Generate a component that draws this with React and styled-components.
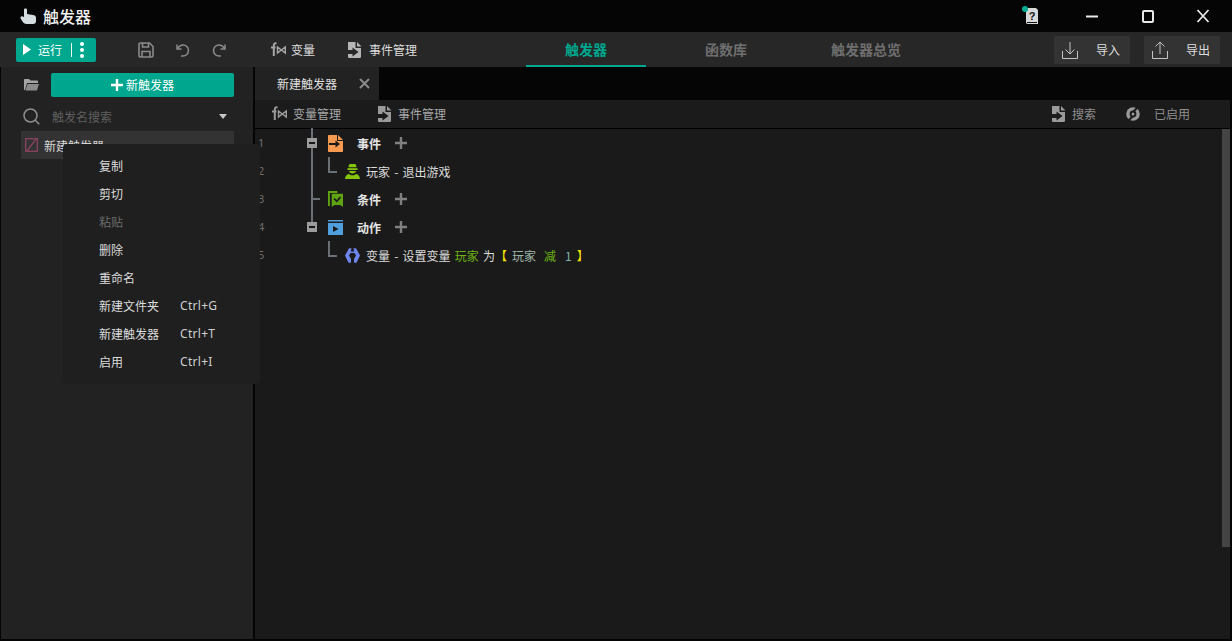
import React from "react";
import styled, { createGlobalStyle } from "styled-components";

const Global = createGlobalStyle`
  html, body { margin: 0; padding: 0; height: 100%; background: #050505; overflow: hidden; }
  #root { height: 100%; }
  * { box-sizing: border-box; }
`;

const Shell = styled.div`
  position: relative;
  width: 1232px; height: 641px;
  display: flex; flex-direction: column;
  background: #050505;
  color: #e2e2e2;
  font-family: "Noto Sans CJK SC", "Noto Sans", sans-serif;
  font-size: 12px;
  padding-bottom: 2px;
`;

const TitleBar = styled.header`
  height: 32px; flex: none;
  display: flex; align-items: center;
  padding-left: 20px;
`;
const Title = styled.h1`
  margin: 0 0 0 6px; font-size: 16px; font-weight: 500; color: #f0f0f0; line-height: 20px;
`;
const WindowControls = styled.div`
  margin-left: auto; display: flex; align-items: center; padding-right: 22px;
`;
const HelpWrap = styled.span`
  position: relative; display: flex; margin-right: 46px;
  &::before {
    content: ""; position: absolute; left: -3px; top: -2px; width: 6px; height: 6px;
    border-radius: 50%; background: #00ad94;
  }
`;
const WinButton = styled.span`
  display: flex; width: 14px; height: 14px; margin-left: ${p => p.$gap}px;
`;

const MainBar = styled.div`
  height: 35px; flex: none;
  display: flex; align-items: center;
  background: #272727;
  padding-left: 16px;
`;
const RunButton = styled.div`
  width: 80px; height: 24px; border-radius: 2px;
  background: #00a78f; color: #fff;
  display: flex; align-items: center; padding-left: 6px;
`;
const RunLabel = styled.span` margin-left: 6px; line-height: 24px; `;
const RunDivider = styled.span` width: 1px; height: 14px; background: #e8f8f5; margin-left: 9px; `;
const RunDots = styled.span`
  display: flex; flex-direction: column; gap: 2px; margin-left: 8px;
  i { display: block; width: 4px; height: 4px; border-radius: 50%; background: #fff; }
`;
const QuickIcons = styled.div`
  display: flex; align-items: center; margin-left: 42px; width: 132px; gap: 22px;
`;
const ToolItem = styled.div`
  display: flex; align-items: center; gap: ${p => p.$gap ?? 6}px;
  margin-right: ${p => p.$mr ?? 0}px; color: ${p => p.$color ?? "#dedede"};
  margin-left: ${p => p.$push ? "auto" : "0"};
  line-height: 18px; white-space: nowrap;
`;
const Tabs = styled.nav`
  display: flex; gap: 20px; margin-left: 109px; height: 35px; margin-right: auto;
`;
const Tab = styled.div`
  width: 120px; height: 35px;
  display: flex; align-items: center; justify-content: center;
  font-size: 14px; font-weight: 700;
  color: ${p => p.$active ? "#00a78f" : "#6f6f6f"};
  border-bottom: 2px solid ${p => p.$active ? "#00a78f" : "transparent"};
`;
const PortButton = styled.div`
  width: 76px; height: 28px; border-radius: 2px; background: #333333;
  display: flex; align-items: center; padding-left: 8px; gap: 18px;
  margin-right: ${p => p.$mr}px; color: #dedede;
`;

const Body = styled.div`
  flex: 1; min-height: 0; display: flex; padding: 0 2px 0 1px;
`;
const Sidebar = styled.aside`
  width: 252px; flex: none; background: #222222; margin-right: 2px;
  display: flex; flex-direction: column; padding: 6px 19px 0 20px;
`;
const SideTop = styled.div`
  display: flex; align-items: center; height: 24px; padding-left: 3px;
`;
const NewButton = styled.div`
  margin-left: 12px; width: 183px; height: 24px; border-radius: 2px; background: #00a78f; color: #fff;
  display: flex; align-items: center; justify-content: center; gap: 3px; line-height: 24px;
`;
const SearchRow = styled.div`
  display: flex; align-items: center; height: 26px; margin-top: 6px; padding-left: 2px; color: #5f5f5f;
`;
const SearchText = styled.span` margin-left: 12px; `;
const Caret = styled.span`
  margin-left: auto; margin-right: 7px; width: 0; height: 0;
  border-left: 4px solid transparent; border-right: 4px solid transparent; border-top: 5px solid #c8c8c8;
`;
const TriggerItem = styled.div`
  height: 28px; margin-top: 2px; background: #333333;
  display: flex; align-items: center; padding-left: 4px; gap: 6px; color: #d8d8d8;
`;

const Menu = styled.ul`
  position: absolute; left: 63px; top: 144px; width: 197px; height: 240px;
  margin: 0; padding: 7px 0 0 36px; list-style: none;
  background: #1f1f1f; border-radius: 4px;
`;
const MenuRow = styled.li`
  height: 28px; display: flex; align-items: center;
  color: ${p => p.$disabled ? "#6c6c6c" : "#dcdcdc"};
`;
const MenuLabel = styled.span` width: 81px; flex: none; `;
const Shortcut = styled.span`
  font-size: 12px; color: #cfcfcf; font-family: "Noto Sans", sans-serif; letter-spacing: 0.3px;
`;

const Workspace = styled.main`
  flex: 1; min-width: 0; display: flex; flex-direction: column;
`;
const TabStrip = styled.div` height: 33px; flex: none; display: flex; `;
const DocTab = styled.div`
  width: 124px; background: #222222; display: flex; align-items: center; padding-left: 22px; color: #e0e0e0;
`;
const DocClose = styled.span` display: flex; margin-left: 22px; `;
const SubBar = styled.div`
  height: 29px; flex: none; background: #1b1b1b; border-bottom: 1px solid #000;
  display: flex; align-items: center; padding-left: 16px; color: #a8a8a8;
`;
const EditorArea = styled.div`
  position: relative; flex: 1; min-height: 0; background: #1a1a1a;
`;
const Scrollbar = styled.div`
  position: absolute; right: 0; top: 0; width: 8px; height: 418px; background: #444444;
`;
const Row = styled.div`
  position: relative; height: 28px; display: flex; align-items: center;
`;
const LineNo = styled.span`
  position: absolute; left: 3px; top: 6px; font-size: 11px; line-height: 16px; color: #6f6f6f;
  font-family: "Noto Sans", sans-serif;
`;
const Stem = styled.span`
  position: absolute; left: 56px; width: 2px; background: #6a7076;
  top: ${p => p.$top}px; height: ${p => p.$height}px;
`;
const Toggle = styled.span`
  position: absolute; left: 52px; top: 9px; width: 10px; height: 10px; background: #9c9c9c;
  &::after { content: ""; position: absolute; left: 2px; top: 4px; width: 6px; height: 2px; background: #1a1a1a; }
`;
const Branch = styled.span`
  position: absolute; left: 58px; top: 13px; width: 7px; height: 2px; background: #6a7076;
`;
const Elbow = styled.span`
  position: absolute; left: 73px; top: 0; width: 9px; height: 16px;
  border-left: 2px solid #6a7076; border-bottom: 2px solid #6a7076;
`;
const HeadCell = styled.div`
  margin-left: 73px; display: flex; align-items: center; font-weight: 700; color: #e4e4e4;
`;
const HeadLabel = styled.span` margin-left: 14px; `;
const PlusMark = styled.span` display: flex; margin-left: 14px; `;
const LeafCell = styled.div`
  margin-left: 90px; display: flex; align-items: center; white-space: pre; color: #dcdcdc; word-spacing: 1.5px;
`;
const LeafText = styled.span` margin-left: 6px; `;
const Token = styled.span`
  color: ${p => p.$c}; margin-left: ${p => p.$ml ?? 0}px;
`;

const strokeProps = { fill: "none", stroke: "currentColor" };

const HandIcon = () => (
  <svg width="17" height="18" viewBox="0 0 17 18">
    <path fill="#d5dcdf" d="M4 2.500c0-1.400 3-1.400 3 0V7l6 1c2 .2 3 1.200 3 3v3c0 2-1 3-3 3H6.500C4.500 17 3.500 16 2.500 14.500L.6 11.500C0 10.400 1 9 2.200 9.300L4 10z"/>
  </svg>
);
const HelpIcon = () => (
  <svg width="14" height="16" viewBox="0 0 14 16">
    <path fill="#d8d8d8" d="M1 0h10l2 2v14H2l-1-1z"/>
    <path fill="#111" d="M2 14h10v1H2z"/>
    <text x="7" y="11.500" textAnchor="middle" fontSize="11" fontWeight="700" fontFamily="Liberation Sans" fill="#111">?</text>
  </svg>
);
const MinIcon = () => <svg width="14" height="14" viewBox="0 0 14 14"><path d="M1 7.500h12" stroke="#e8e8e8" strokeWidth="2"/></svg>;
const MaxIcon = () => <svg width="14" height="14" viewBox="0 0 14 14"><rect x="2" y="2" width="10" height="11" rx="1" fill="none" stroke="#e8e8e8" strokeWidth="2"/></svg>;
const CloseIcon = () => <svg width="14" height="14" viewBox="0 0 14 14"><path d="M1.500 1l11 12M12.500 1l-11 12" stroke="#e8e8e8" strokeWidth="1.800"/></svg>;
const PlayIcon = () => <svg width="10" height="11" viewBox="0 0 10 11"><path d="M1 0l8 5.500L1 11z" fill="#fff"/></svg>;
const SaveIcon = () => (
  <svg width="16" height="16" viewBox="0 0 16 16" color="#8b8b8b" {...strokeProps} strokeWidth="1.600">
    <path d="M1 2.500C1 1.600 1.600 1 2.500 1h9L15 4.500v9c0 .9-.6 1.500-1.500 1.500h-11C1.600 15 1 14.400 1 13.500z"/>
    <path d="M4.500 1v4h6V1M4 15v-5.500h8V15"/>
  </svg>
);
const UndoIcon = ({ flip }) => (
  <svg width="14" height="14" viewBox="0 0 14 14" color="#8b8b8b" {...strokeProps} strokeWidth="1.500"
    style={flip ? { transform: "scaleX(-1)" } : undefined}>
    <path d="M1 1.500V6h4.500"/>
    <path d="M1.500 5.500C3 3 5 2 7 2c3 0 5.500 2.400 5.500 5.500S10 13 7 13H5"/>
  </svg>
);
const FxIcon = ({ color = "#a6a6a6" }) => (
  <svg width="16" height="16" viewBox="0 0 16 16" color={color} {...strokeProps}>
    <path strokeWidth="2" d="M6.500 1.500C4.500 1 3.800 1.800 3.800 3.500V14M1 5.500h4.500"/>
    <path strokeWidth="1.400" d="M7.500 5v6l3.800-3 4 3V5l-4 3z"/>
  </svg>
);
const DocArrowIcon = ({ color = "#b5b5b5" }) => (
  <svg width="15" height="16" viewBox="0 0 15 16">
    <path fill={color} d="M1 0h7.500v6H14v8.500c0 1-.6 1.500-1.500 1.500h-10C1.500 16 1 15.500 1 14.500V12h4.500v2.500L11.500 10 5.500 5.500V8H1z"/>
    <path fill={color} d="M10 0l4.500 4.500H10z"/>
  </svg>
);
const ImportIcon = ({ up }) => (
  <svg width="16" height="18" viewBox="0 0 16 18" color="#c4c4c4" {...strokeProps} strokeWidth="1">
    <path d="M.5 10v7.500h15V10"/>
    {up ? <path d="M8 13V1M3.500 5.500L8 1l4.500 4.500"/> : <path d="M8 1v12M3.500 8.500L8 13l4.500-4.500"/>}
  </svg>
);
const FolderIcon = () => (
  <svg width="15" height="12" viewBox="0 0 15 12">
    <path fill="#a4a4a4" d="M0 1c0-.6.4-1 1-1h4l1.500 1.500H13c.6 0 1 .4 1 1V4H3L1 11H0z"/>
    <path fill="#8c8c8c" d="M3.500 5H15l-2 6.500H1.500z"/>
  </svg>
);
const PlusIcon = ({ size = 12, color = "#fff", w = 2.400 }) => (
  <svg width={size} height={size} viewBox="0 0 12 12"><path d="M6 0v12M0 6h12" stroke={color} strokeWidth={w}/></svg>
);
const SearchIcon = () => (
  <svg width="17" height="17" viewBox="0 0 17 17" color="#8f8f8f" {...strokeProps} strokeWidth="1.500">
    <circle cx="7.500" cy="7.500" r="6.500"/><path d="M12.300 12.300l4 4"/>
  </svg>
);
const DisabledIcon = () => (
  <svg width="13" height="14" viewBox="0 0 13 14" color="#8b4460" {...strokeProps} strokeWidth="1.300">
    <rect x=".7" y=".7" width="11.600" height="12.600"/><path d="M11 1L2 13"/>
  </svg>
);
const XMark = () => <svg width="11" height="11" viewBox="0 0 11 11"><path d="M1 1l9 9M10 1l-9 9" stroke="#8a8a8a" strokeWidth="2"/></svg>;
const RefreshIcon = () => (
  <svg width="14" height="14" viewBox="0 0 14 14">
    <circle cx="7" cy="7" r="6.800" fill="#9a9a9a"/>
    <circle cx="7" cy="7" r="3.400" fill="#1b1b1b"/>
    <path d="M11 1L7.500 4.500M3 13l3.500-3.500" stroke="#1b1b1b" strokeWidth="2"/>
    <circle cx="7" cy="7" r="1.500" fill="#9a9a9a"/>
  </svg>
);
const EventIcon = () => (
  <svg width="15" height="17" viewBox="0 0 15 17">
    <path fill="#f7994f" d="M0 1c0-.6.4-1 1-1h8v6h6v10c0 .6-.4 1-1 1H1c-.6 0-1-.4-1-1z"/>
    <path fill="#f7994f" d="M10 0l5 5h-5z"/>
    <path fill="#1a1a1a" d="M1 8h6.500V5.500L12 9l-4.500 3.500V10H1z"/>
  </svg>
);
const PlayerIcon = () => (
  <svg width="15" height="15" viewBox="0 0 15 15">
    <path fill="#86c30c" d="M3.500 3.200a4 4 0 0 1 8 0z"/>
    <path fill="#86c30c" d="M2.500 4.200h10v1.800h-10z"/>
    <path fill="#86c30c" d="M4 7h7c-.3 1.500-1.700 2.500-3.500 2.500S4.300 8.500 4 7z"/>
    <path fill="#86c30c" d="M0 15c0-2.700 1.500-4.600 4-5 1 1 2 1.300 3.500 1.300s2.500-.3 3.500-1.300c2.500.4 4 2.300 4 5z"/>
  </svg>
);
const CondIcon = () => (
  <svg width="15" height="16" viewBox="0 0 16 17">
    <path fill="#5fa312" d="M0 0h10v2H2v14H0z"/>
    <path fill="#5fa312" d="M4 3h12v14l-3-2H7l-3 2z"/>
    <path fill="none" stroke="#1a1a1a" strokeWidth="1.800" d="M6.500 8l2.800 3 4-4.500"/>
  </svg>
);
const ActionIcon = () => (
  <svg width="15" height="15" viewBox="0 0 15 15">
    <path fill="#4f9fde" d="M0 0h15v1.500H0zM0 3h15v12H0z"/>
    <path fill="#1a1a1a" d="M5 6l5.500 3L5 12z"/>
  </svg>
);
const VarIcon = () => (
  <svg width="15" height="15" viewBox="0 0 15 15">
    <path fill="#6f85ee" d="M4 .3h2.500L5.800 3.600h3.400L8.500.3H11l4 7.200-3.500 7.200H9V11l2-3.500-1.500-2.500h-4L4 7.500 6 11v3.700H3.500L0 7.500z"/>
  </svg>
);

const menuItems = [
  ["复制"], ["剪切"], ["粘贴", "", true], ["删除"], ["重命名"],
  ["新建文件夹", "Ctrl+G"], ["新建触发器", "Ctrl+T"], ["启用", "Ctrl+I"],
];

export default function App() {
  return (
    <Shell>
      <Global />
      <TitleBar>
        <HandIcon />
        <Title>触发器</Title>
        <WindowControls>
          <HelpWrap><HelpIcon /></HelpWrap>
          <WinButton $gap={0}><MinIcon /></WinButton>
          <WinButton $gap={42}><MaxIcon /></WinButton>
          <WinButton $gap={41}><CloseIcon /></WinButton>
        </WindowControls>
      </TitleBar>

      <MainBar>
        <RunButton>
          <PlayIcon />
          <RunLabel>运行</RunLabel>
          <RunDivider />
          <RunDots><i /><i /><i /></RunDots>
        </RunButton>
        <QuickIcons>
          <SaveIcon />
          <UndoIcon />
          <UndoIcon flip />
        </QuickIcons>
        <ToolItem $gap={5} $mr={32}><FxIcon />变量</ToolItem>
        <ToolItem $gap={7}><DocArrowIcon />事件管理</ToolItem>
        <Tabs>
          <Tab $active>触发器</Tab>
          <Tab>函数库</Tab>
          <Tab>触发器总览</Tab>
        </Tabs>
        <PortButton $mr={14}><ImportIcon />导入</PortButton>
        <PortButton $mr={12}><ImportIcon up />导出</PortButton>
      </MainBar>

      <Body>
        <Sidebar>
          <SideTop>
            <FolderIcon />
            <NewButton><PlusIcon />新触发器</NewButton>
          </SideTop>
          <SearchRow>
            <SearchIcon />
            <SearchText>触发名搜索</SearchText>
            <Caret />
          </SearchRow>
          <TriggerItem><DisabledIcon />新建触发器</TriggerItem>
        </Sidebar>

        <Workspace>
          <TabStrip>
            <DocTab>新建触发器<DocClose><XMark /></DocClose></DocTab>
          </TabStrip>
          <SubBar>
            <ToolItem $color="#a8a8a8" $gap={6} $mr={36}><FxIcon color="#9a9a9a" />变量管理</ToolItem>
            <ToolItem $color="#a8a8a8" $gap={6}><DocArrowIcon color="#9a9a9a" />事件管理</ToolItem>
            <ToolItem $push $color="#8e8e8e" $gap={6} $mr={30}><DocArrowIcon color="#9a9a9a" />搜索</ToolItem>
            <ToolItem $color="#8e8e8e" $gap={14} $mr={40}><RefreshIcon />已启用</ToolItem>
          </SubBar>
          <EditorArea>
            <Row>
              <LineNo>1</LineNo>
              <Stem $top={-1} $height={29} />
              <Toggle />
              <HeadCell><EventIcon /><HeadLabel>事件</HeadLabel><PlusMark><PlusIcon color="#808080" /></PlusMark></HeadCell>
            </Row>
            <Row>
              <LineNo>2</LineNo>
              <Stem $top={0} $height={28} />
              <Elbow />
              <LeafCell><PlayerIcon /><LeafText>玩家 - 退出游戏</LeafText></LeafCell>
            </Row>
            <Row>
              <LineNo>3</LineNo>
              <Stem $top={0} $height={28} />
              <Branch />
              <HeadCell><CondIcon /><HeadLabel>条件</HeadLabel><PlusMark><PlusIcon color="#808080" /></PlusMark></HeadCell>
            </Row>
            <Row>
              <LineNo>4</LineNo>
              <Stem $top={0} $height={10} />
              <Toggle />
              <HeadCell><ActionIcon /><HeadLabel>动作</HeadLabel><PlusMark><PlusIcon color="#808080" /></PlusMark></HeadCell>
            </Row>
            <Row>
              <LineNo>5</LineNo>
              <Elbow />
              <LeafCell>
                <VarIcon />
                <LeafText>
                  变量 - 设置变量 <Token $c="#6fb317">玩家</Token> 为<Token $c="#f2e000">【</Token>
                  <Token $c="#9fb7a8" $ml={5}>玩家</Token>
                  <Token $c="#6fb317" $ml={8}>减</Token>
                  <Token $c="#7fb0b0" $ml={9}>1</Token>
                  <Token $c="#f2e000" $ml={5}>】</Token>
                </LeafText>
              </LeafCell>
            </Row>
            <Scrollbar />
          </EditorArea>
        </Workspace>
      </Body>

      <Menu>
        {menuItems.map(([label, key, disabled]) => (
          <MenuRow key={label} $disabled={disabled}>
            <MenuLabel>{label}</MenuLabel>
            {key && <Shortcut>{key}</Shortcut>}
          </MenuRow>
        ))}
      </Menu>
    </Shell>
  );
}
